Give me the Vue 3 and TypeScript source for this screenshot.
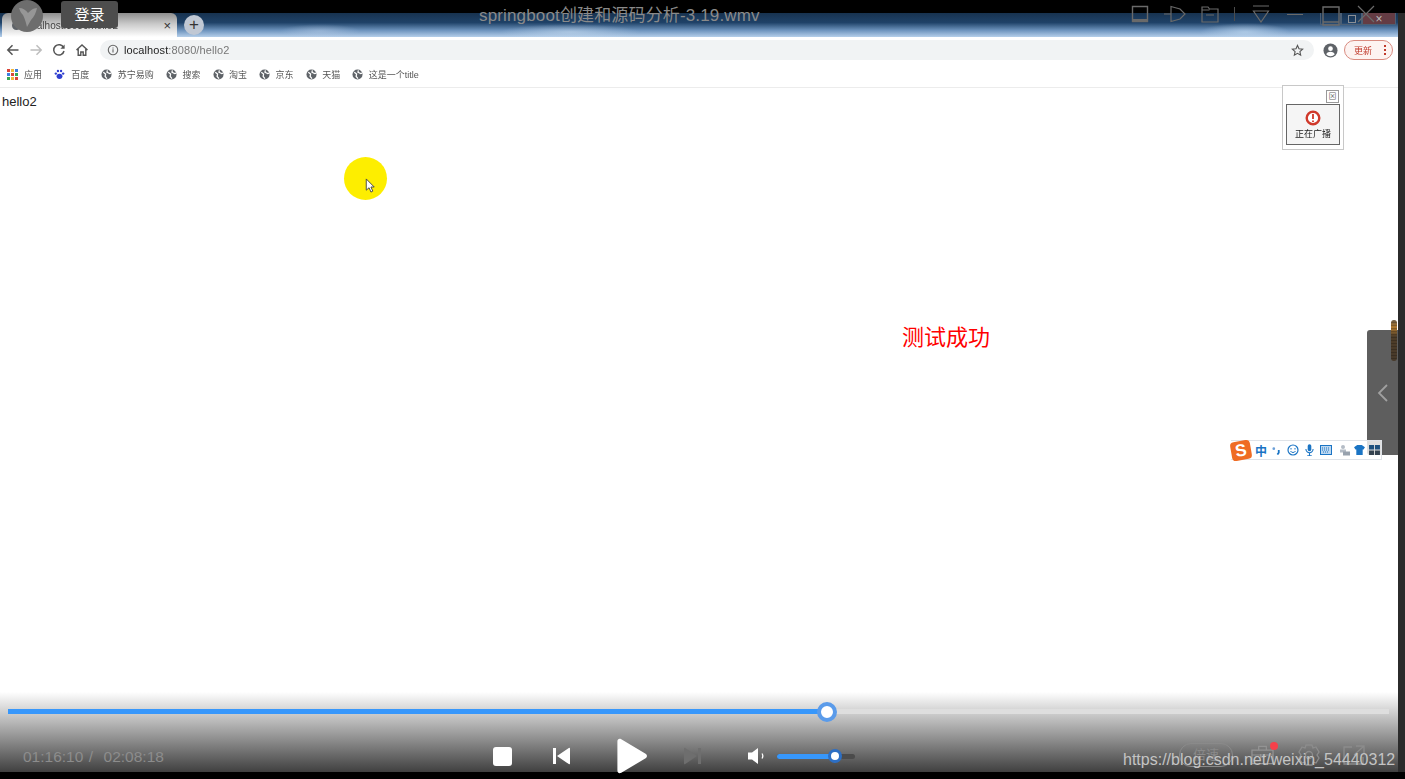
<script setup lang="ts">
const bookmarks = ['苏宁易购', '搜索', '淘宝', '京东', '天猫', '这是一个title']
const appsColors = ['#d9453a', '#f2b63c', '#3d7fe0', '#3d7fe0', '#d9453a', '#36a853', '#36a853', '#f2b63c', '#d9453a']
const progress = 59.3
</script>

<template>
  <div class="player">
    <div class="frame-top"></div>
    <div class="middle">
      <div class="screen">
        <div class="tabstrip">
          <div class="tab">
            <span class="favicon"></span>
            <span class="tab-title">localhost:8080/hello2</span>
            <span class="tab-close">×</span>
          </div>
          <div class="new-tab">+</div>
          <div class="caption">
            <span class="cap-btn"></span>
            <span class="cap-btn"><i></i></span>
            <span class="cap-btn cap-close">×</span>
          </div>
        </div>
        <div class="toolbar">
          <svg class="nav" viewBox="0 0 14 14" width="14" height="14">
            <path d="M12.500 7H2M6.500 2.200 1.800 7l4.700 4.800" fill="none" stroke="#555" stroke-width="1.500" />
          </svg>
          <svg class="nav" viewBox="0 0 14 14" width="14" height="14">
            <path d="M1.500 7H12M7.500 2.200 12.200 7l-4.700 4.800" fill="none" stroke="#bdbdbd" stroke-width="1.500" />
          </svg>
          <svg class="nav" viewBox="0 0 14 14" width="14" height="14">
            <path d="M11.600 4.600A5.200 5.200 0 1 0 12 8" fill="none" stroke="#555" stroke-width="1.500" />
            <path d="M12.600 1.600v4.200H8.400z" fill="#555" />
          </svg>
          <svg class="nav" viewBox="0 0 14 14" width="14" height="14">
            <path d="M1.500 7 7 2l5.500 5M3.200 6v6.300h2.600V9h2.400v3.300h2.600V6" fill="none" stroke="#555" stroke-width="1.400" />
          </svg>
          <div class="omnibox">
            <svg viewBox="0 0 12 12" width="12" height="12">
              <circle cx="6" cy="6" r="4.700" fill="none" stroke="#666" stroke-width="1.100" />
              <path d="M6 5.200v3.200M6 3.400v1" stroke="#666" stroke-width="1.100" />
            </svg>
            <span class="url"><b>localhost</b>:8080/hello2</span>
            <svg class="star" viewBox="0 0 14 14" width="13" height="13">
              <path d="m7 1.600 1.600 3.600 3.900.4-2.900 2.600.8 3.800L7 10.100l-3.400 1.900.8-3.800-2.900-2.600 3.900-.4z" fill="none" stroke="#555" stroke-width="1.200" />
            </svg>
          </div>
          <svg class="profile" viewBox="0 0 16 16" width="15" height="15">
            <circle cx="8" cy="8" r="7.500" fill="#5f6368" />
            <circle cx="8" cy="6" r="2.500" fill="#fff" />
            <path d="M3.400 12c1-1.900 2.800-2.600 4.600-2.600s3.600.7 4.600 2.600A6 6 0 0 1 8 14a6 6 0 0 1-4.600-2z" fill="#fff" />
          </svg>
          <div class="update">
            <span>更新</span>
            <span class="dots"><i></i><i></i><i></i></span>
          </div>
        </div>
        <div class="bookmarks">
          <div class="bm bm-wide">
            <span class="apps"><i v-for="(c, i) in appsColors" :key="i" :style="{ background: c }"></i></span>
            <span>应用</span>
          </div>
          <div class="bm bm-wide">
            <svg viewBox="0 0 12 12" width="11" height="11">
              <ellipse cx="6" cy="8" rx="3.200" ry="2.800" fill="#2f3fd0" />
              <circle cx="2" cy="5" r="1.300" fill="#2f3fd0" />
              <circle cx="10" cy="5" r="1.300" fill="#2f3fd0" />
              <circle cx="4.300" cy="2.200" r="1.300" fill="#2f3fd0" />
              <circle cx="7.700" cy="2.200" r="1.300" fill="#2f3fd0" />
            </svg>
            <span>百度</span>
          </div>
          <div class="bm" v-for="name in bookmarks" :key="name">
            <svg viewBox="0 0 12 12" width="11" height="11">
              <circle cx="6" cy="6" r="5.500" fill="#5f6368" />
              <path d="M2.500 3.500 5 5.500 4.500 8l2 2.500M7 1.500 6.500 3.500l3 1.500 1.500-.5" fill="none" stroke="#fff" stroke-width="1.400" />
            </svg>
            <span>{{ name }}</span>
          </div>
        </div>
        <div class="page">
          <p class="hello">hello2</p>
          <p class="success">测试成功</p>
        </div>
      </div>
      <div class="frame-right"></div>
    </div>
    <div class="frame-bottom"></div>

    <!-- things the video player draws over the recording -->
    <div class="avatar">
      <svg viewBox="0 0 32 32" width="32" height="32">
        <path d="M8 8c4 0 7 2 9 5 2-2 5-5 9-5-1 5-3 9-6 12l-4 7c-1-4-2-8-4-12-2-2-3-4-4-7z" fill="#969696" />
      </svg>
    </div>
    <div class="login">登录</div>
    <div class="video-title">springboot创建和源码分析-3.19.wmv</div>

    <div class="win-icons">
      <svg viewBox="0 0 18 18" width="18" height="18">
        <path d="M1.500 1.500h15v15h-15z" fill="none" stroke="#6a6a6a" stroke-width="1.400" />
        <path d="M1.500 14h15v2.500h-15z" fill="#6a6a6a" />
      </svg>
      <svg viewBox="0 0 22 18" width="22" height="18">
        <path d="M0 9h7M7 1.500l9 2.500 5 5-5 5-9 2.500z" fill="none" stroke="#6a6a6a" stroke-width="1.200" />
      </svg>
      <svg viewBox="0 0 18 18" width="18" height="18">
        <path d="M1 2h6l1.500 2H17v13H1zM1 5h7.500M5 10h8" fill="none" stroke="#6a6a6a" stroke-width="1.200" />
      </svg>
      <span class="win-sep"></span>
      <svg class="win-filter" viewBox="0 0 18 18" width="18" height="18">
        <path d="M1 1h16M1.500 6h15L9 17z" fill="none" stroke="#6a6a6a" stroke-width="1.200" />
      </svg>
      <span class="win-min"></span>
      <svg class="win-max" viewBox="0 0 18 20" width="18" height="20">
        <path d="M1 1h16v15H1zM1 16v3h16v-3" fill="none" stroke="#6a6a6a" stroke-width="1.400" />
      </svg>
      <svg viewBox="0 0 18 18" width="18" height="18">
        <path d="M1 1l16 16M17 1 1 17" fill="none" stroke="#6a6a6a" stroke-width="1.200" />
      </svg>
    </div>

    <div class="side-handle">
      <svg viewBox="0 0 12 20" width="12" height="20">
        <path d="M10 2 2 10l8 8" fill="none" stroke="#a0a0a0" stroke-width="1.800" />
      </svg>
    </div>
    <div class="scroll-thumb"></div>

    <div class="broadcast">
      <span class="bc-close">⊠</span>
      <div class="bc-body">
        <svg viewBox="0 0 16 16" width="16" height="16">
          <circle cx="8" cy="8" r="6.300" fill="#fff" stroke="#d0392b" stroke-width="2.400" />
          <path d="M8 4v5M8 10.500v1.500" stroke="#d0392b" stroke-width="1.800" />
        </svg>
        <span>正在广播</span>
      </div>
    </div>

    <div class="pointer-spot"></div>
    <div class="pointer">
      <svg viewBox="0 0 10 16" width="10" height="15">
        <path d="M1 1v12l3-2.600 2 4.600 2-1-2-4.400h3.500z" fill="#fff" stroke="#444" stroke-width="1" />
      </svg>
    </div>

    <div class="ime">
      <span class="ime-logo">S</span>
      <span class="ime-zh">中</span>
      <svg viewBox="0 0 10 10" width="9" height="9">
        <circle cx="2" cy="3" r="1.500" fill="#6a9fd8" />
        <path d="M7.500 4.500v3L6 9.500" stroke="#1a74c4" stroke-width="2" fill="none" />
      </svg>
      <svg class="ime-gap" viewBox="0 0 12 12" width="12" height="12">
        <circle cx="6" cy="6" r="5" fill="none" stroke="#1a74c4" stroke-width="1.200" />
        <path d="M3.500 7c1 2 4 2 5 0M4 4v1.500M8 4v1.500" fill="none" stroke="#1a74c4" stroke-width="1" />
      </svg>
      <svg viewBox="0 0 10 13" width="9" height="12">
        <rect x="3" y="0" width="4" height="8" rx="2" fill="#1a74c4" />
        <path d="M1 5.500a4 4 0 0 0 8 0M5 9.500V13M2.500 13h5" fill="none" stroke="#1a74c4" stroke-width="1.200" />
      </svg>
      <svg class="ime-gap" viewBox="0 0 12 10" width="12" height="10">
        <rect x="0.500" y="0.500" width="11" height="9" fill="#bcd7f0" stroke="#1a74c4" />
        <path d="M2 3h8M2 5h8M3 7h6" stroke="#1a74c4" stroke-dasharray="1 1" />
      </svg>
      <svg viewBox="0 0 12 12" width="12" height="12">
        <circle cx="5" cy="3" r="2" fill="#b4bcc6" />
        <rect x="2" y="5.500" width="6" height="3" fill="#b4bcc6" />
        <rect x="5" y="7.500" width="7" height="4" fill="#98a2ae" />
      </svg>
      <svg class="ime-tight" viewBox="0 0 12 11" width="11" height="10">
        <path d="M3.500 0h5L12 2.500 10.500 5H9.500v6h-7V5h-1L0 2.500z" fill="#1a74c4" />
      </svg>
      <svg class="ime-tight" viewBox="0 0 12 11" width="11" height="10">
        <path d="M0 0h5.500v5H0zM6.500 0H12v5H6.500z" fill="#1c4f7d" />
        <path d="M0 6h5.500v5H0zM6.500 6H12v5H6.500z" fill="#34424f" />
      </svg>
    </div>

    <div class="controls">
      <div class="seek">
        <div class="seek-fill" :style="{ width: progress + '%' }">
          <span class="seek-knob"></span>
        </div>
      </div>
      <div class="ctl-row">
        <div class="time">01:16:10 /&nbsp; 02:08:18</div>
        <div class="ctl-center">
          <span class="stop"></span>
          <svg viewBox="0 0 20 20" width="20" height="20">
            <path d="M1 2h3v16H1zM18 2.500v15a.8.8 0 0 1-1.200.6L5 10l11.800-8.100a.8.8 0 0 1 1.200.6z" fill="#fff" />
          </svg>
          <svg class="play" viewBox="0 0 32 37" width="32" height="36">
            <path d="M1 3.500c0-2.500 2-3.500 4-2.300l25 15c1.800 1.100 1.800 3.500 0 4.600l-25 15c-2 1.200-4 .2-4-2.300z" fill="#fff" />
          </svg>
          <svg viewBox="0 0 20 20" width="20" height="20">
            <path d="M19 2h-3v16h3zM2 2.500v15a.8.8 0 0 0 1.200.6L15 10 3.200 1.900A.8.8 0 0 0 2 2.500z" fill="#6e6e6e" />
          </svg>
          <div class="volume">
            <svg viewBox="0 0 20 18" width="20" height="18">
              <path d="M1 5.500h4L11 1v16l-6-4.500H1z" fill="#fff" />
              <path d="M15 6.500c1 1.500 1 3.500 0 5" fill="none" stroke="#fff" stroke-width="1.300" />
            </svg>
            <div class="vol-track">
              <div class="vol-fill"><span class="vol-knob"></span></div>
            </div>
          </div>
        </div>
        <div class="ctl-right">
          <span class="speed">倍速</span>
          <span class="red-dot-wrap">
            <svg viewBox="0 0 24 20" width="23" height="20">
              <path d="M1 5h22v14H1zM8 5V1h8v4M1 10h22M10 9v3h4V9" fill="none" stroke="#939393" stroke-width="1.300" />
            </svg>
            <i class="red-dot"></i>
          </span>
          <svg class="gear" viewBox="0 0 22 22" width="22" height="22">
            <path d="M8 1h6l1 3 3-1 3 5-2 3 2 3-3 5-3-1-1 3H8l-1-3-3 1-3-5 2-3-2-3 3-5 3 1z" fill="none" stroke="#8c8c8c" stroke-width="1.300" />
            <circle cx="11" cy="11" r="3.500" fill="none" stroke="#8c8c8c" stroke-width="1.300" />
          </svg>
          <svg class="fullscreen" viewBox="0 0 22 20" width="22" height="20">
            <path d="M9 2H1v17h19v-7M13 1h8v7M21 1l-10 9" fill="none" stroke="#8c8c8c" stroke-width="1.300" />
          </svg>
        </div>
      </div>
    </div>
    <div class="watermark">https://blog.csdn.net/weixin_54440312</div>
  </div>
</template>

<style scoped>
.player {
  position: relative;
  width: 1405px;
  height: 779px;
  display: flex;
  flex-direction: column;
  overflow: hidden;
  background: #000;
  font-family: "Liberation Sans", "Noto Sans CJK SC", sans-serif;
}
.frame-top {
  height: 13px;
  background: #000;
}
.frame-bottom {
  height: 7px;
  background: #000;
}
.frame-right {
  width: 7px;
  background: #2b2b2b;
}
.middle {
  flex: 1;
  display: flex;
  min-height: 0;
}
.screen {
  flex: 1;
  display: flex;
  flex-direction: column;
  background: #fff;
}
.tabstrip {
  height: 24px;
  display: flex;
  align-items: flex-end;
  padding-left: 2px;
  background:
    radial-gradient(ellipse 40px 7px at 320px 18px, rgba(190, 210, 235, 0.45), transparent),
    radial-gradient(ellipse 45px 9px at 1245px 19px, rgba(190, 215, 240, 0.7), transparent),
    radial-gradient(ellipse 70px 8px at 570px 19px, rgba(200, 220, 240, 0.6), transparent),
    linear-gradient(#17324f 0, #1f4268 40%, #6d93bd 72%, #b5cfea 100%);
}
.tab {
  width: 175px;
  height: 24px;
  display: flex;
  align-items: center;
  box-sizing: border-box;
  padding: 0 6px 0 10px;
  gap: 3px;
  border-radius: 6px 6px 0 0;
  background: linear-gradient(#8d8d8d, #c9c9c9 45%, #fff);
  font-size: 10px;
  color: #444;
}
.favicon {
  width: 9px;
  height: 9px;
  border-radius: 50%;
  background: #5f6368;
}
.tab-title {
  flex: 1;
  white-space: nowrap;
  filter: blur(0.4px);
}
.tab-close {
  font-size: 13px;
  color: #333;
}
.new-tab {
  width: 20px;
  height: 20px;
  margin: 0 0 2px 7px;
  border-radius: 50%;
  background: #c0c8d4;
  color: #333;
  font-size: 17px;
  line-height: 19px;
  text-align: center;
}
.caption {
  align-self: flex-start;
  margin-left: auto;
  margin-right: 2px;
  display: flex;
}
.cap-btn {
  width: 21px;
  height: 12px;
  display: flex;
  align-items: center;
  justify-content: center;
  box-sizing: border-box;
  border: 1px solid #4b5f75;
  border-top: none;
}
.cap-btn i {
  width: 6px;
  height: 6px;
  border: 1px solid #8a8f96;
}
.cap-close {
  width: 34px;
  background: #643c44;
  color: #bdbdbd;
  font-size: 12px;
  line-height: 12px;
}
.toolbar {
  height: 25px;
  display: flex;
  align-items: center;
  padding-top: 1px;
  box-sizing: border-box;
  background: #fff;
  filter: blur(0.3px);
}
.nav {
  flex: none;
  margin-left: 6px;
  margin-right: 3px;
}
.nav + .nav {
  margin-left: 6px;
}
.omnibox {
  width: 1214px;
  height: 20px;
  margin-left: 8px;
  display: flex;
  align-items: center;
  gap: 5px;
  box-sizing: border-box;
  padding: 0 10px 0 7px;
  border-radius: 10px;
  background: #f1f3f4;
}
.url {
  flex: 1;
  font-size: 11px;
  color: #777;
  letter-spacing: 0.1px;
}
.url b {
  font-weight: normal;
  color: #222;
}
.profile {
  flex: none;
  margin-left: 9px;
}
.update {
  width: 49px;
  height: 20px;
  margin-left: 6px;
  display: flex;
  align-items: center;
  justify-content: space-between;
  box-sizing: border-box;
  padding: 0 6px 0 9px;
  border: 1px solid #d98b80;
  border-radius: 10px;
  background: #fdf3f1;
  font-size: 9px;
  color: #c0392b;
}
.dots {
  display: flex;
  flex-direction: column;
  gap: 2px;
}
.dots i {
  width: 2px;
  height: 2px;
  background: #c0392b;
}
.bookmarks {
  height: 26px;
  display: flex;
  align-items: center;
  gap: 12.2px;
  padding-left: 7px;
  box-sizing: border-box;
  border-bottom: 1px solid #ececec;
  font-size: 9px;
  color: #555;
  filter: blur(0.3px);
}
.bm {
  display: flex;
  align-items: center;
  gap: 5.4px;
}
.bm-wide {
  gap: 6px;
}
.apps {
  width: 11px;
  display: grid;
  grid-template-columns: repeat(3, 3px);
  gap: 1px;
}
.apps i {
  height: 3px;
}
.page {
  flex: 1;
  position: relative;
  display: flex;
  flex-direction: column;
}
.hello {
  margin: 6px 0 0 2px;
  font-size: 13px;
  line-height: 16px;
  color: #222;
}
.success {
  margin: 214px 0 0 902px;
  font-size: 22px;
  line-height: 28px;
  color: #f00;
}

.avatar {
  position: absolute;
  left: 11px;
  top: 0;
  width: 32px;
  height: 32px;
  border-radius: 50%;
  background: #6d6d6d;
}
.login {
  position: absolute;
  left: 61px;
  top: 1px;
  width: 57px;
  height: 27px;
  border-radius: 3px;
  background: #4d4d4d;
  color: #fff;
  font-size: 15px;
  line-height: 28px;
  text-align: center;
}
.video-title {
  position: absolute;
  left: 479px;
  top: 6px;
  font-size: 17px;
  line-height: 19px;
  letter-spacing: 0.15px;
  color: #8a8a8a;
}
.win-icons {
  position: absolute;
  left: 1131px;
  top: 4px;
  height: 20px;
  display: flex;
  align-items: center;
  gap: 15px;
}
.win-sep {
  width: 1px;
  height: 14px;
  background: #4c4c4c;
}
.win-filter,
.win-min {
  margin-left: 2px;
}
.win-min {
  width: 16px;
  height: 1px;
  background: #6a6a6a;
}
.win-max {
  margin-left: 4px;
  margin-right: 2px;
  margin-top: 3px;
}
.side-handle {
  position: absolute;
  left: 1367px;
  top: 330px;
  width: 31px;
  height: 125px;
  display: flex;
  align-items: center;
  justify-content: center;
  border-radius: 3px 0 0 3px;
  background: #5e5e5e;
}
.scroll-thumb {
  position: absolute;
  left: 1391px;
  top: 320px;
  width: 6px;
  height: 41px;
  border-radius: 3px;
  background:
    repeating-linear-gradient(transparent 0, transparent 2px, rgba(0, 0, 0, 0.2) 2px, rgba(0, 0, 0, 0.2) 3px),
    linear-gradient(#6a5a44, #b07a30 18%, #4e3d28 40%, #47392a);
}
.broadcast {
  position: absolute;
  left: 1282px;
  top: 85px;
  width: 62px;
  height: 65px;
  display: flex;
  flex-direction: column;
  align-items: flex-end;
  gap: 1px;
  box-sizing: border-box;
  padding: 4px 3px 3px;
  border: 1px solid #c8c8c8;
  background: #fff;
}
.bc-close {
  width: 13px;
  height: 13px;
  margin-right: 1px;
  box-sizing: border-box;
  border: 1px solid #999;
  font-size: 8px;
  line-height: 11px;
  text-align: center;
  color: #666;
}
.bc-body {
  width: 54px;
  height: 41px;
  display: flex;
  flex-direction: column;
  align-items: center;
  justify-content: center;
  gap: 1px;
  box-sizing: border-box;
  border: 1px solid #666;
  background: #f5f5f5;
  font-size: 9px;
  color: #222;
  filter: blur(0.25px);
}
.pointer {
  position: absolute;
  left: 365px;
  top: 178px;
  line-height: 0;
}
.pointer-spot {
  position: absolute;
  left: 344px;
  top: 157px;
  width: 43px;
  height: 43px;
  border-radius: 50%;
  background: #fdee00;
}
.ime {
  position: absolute;
  left: 1231px;
  top: 440px;
  width: 151px;
  height: 20px;
  display: flex;
  align-items: center;
  gap: 5px;
  box-sizing: border-box;
  background: rgba(255, 255, 255, 0.8);
  border: 1px solid #dfe3e8;
  border-left: none;
}
.ime-logo {
  width: 20px;
  height: 19px;
  flex: none;
  margin-right: -1px;
  border-radius: 4px;
  background: #ef6c24;
  transform: rotate(-10deg);
  color: #fff;
  font-size: 17px;
  font-weight: bold;
  line-height: 19px;
  text-align: center;
}
.ime-zh {
  font-size: 12px;
  font-weight: bold;
  color: #1a74c4;
}
.ime-gap {
  margin-left: 1px;
  margin-right: 1px;
}
.ime-tight {
  margin-left: -1px;
}
.controls {
  position: absolute;
  left: 0;
  right: 7px;
  top: 692px;
  height: 80px;
  background: linear-gradient(rgba(64, 64, 64, 0), rgba(64, 64, 64, 1));
}
.seek {
  position: relative;
  margin: 17px 9px 0 8px;
  height: 5px;
  background: #dedede;
}
.seek-fill {
  position: relative;
  height: 5px;
  background: #3797fb;
}
.seek-knob {
  position: absolute;
  right: -10px;
  top: -7.5px;
  width: 20px;
  height: 20px;
  box-sizing: border-box;
  border: 4px solid #5a9bea;
  border-radius: 50%;
  background: #fff;
}
.ctl-row {
  position: relative;
  height: 58px;
}
.time {
  position: absolute;
  left: 23px;
  top: 34px;
  font-size: 15.5px;
  line-height: 18px;
  word-spacing: 1px;
  color: #8c8c8c;
}
.ctl-center {
  position: absolute;
  left: 493px;
  top: 22px;
  display: flex;
  align-items: center;
  height: 40px;
}
.stop {
  width: 19px;
  height: 19px;
  border-radius: 3px;
  background: #fff;
  margin-right: 40px;
}
.play {
  margin: 0 34px 0 44px;
}
.volume {
  display: flex;
  align-items: center;
  margin-left: 45px;
  gap: 10px;
}
.vol-track {
  width: 78px;
  height: 5px;
  border-radius: 3px;
  background: #4b4b4b;
}
.vol-fill {
  position: relative;
  width: 60px;
  height: 5px;
  border-radius: 3px;
  background: #3797fb;
}
.vol-knob {
  position: absolute;
  right: -5px;
  top: -4.5px;
  width: 14px;
  height: 14px;
  box-sizing: border-box;
  border: 3.5px solid #2d6fc4;
  border-radius: 50%;
  background: #fff;
}
.ctl-right {
  position: absolute;
  left: 1179px;
  top: 22px;
  height: 38px;
  display: flex;
  align-items: center;
  gap: 18px;
}
.gear {
  margin-left: 6px;
}
.fullscreen {
  margin-left: 5px;
}
.speed {
  width: 54px;
  height: 24px;
  box-sizing: border-box;
  border: 1px solid #8a8a8a;
  border-radius: 12px;
  font-size: 13px;
  line-height: 22px;
  text-align: center;
  color: #8a8a8a;
}
.red-dot-wrap {
  position: relative;
  line-height: 0;
}
.red-dot {
  position: absolute;
  right: -4px;
  top: -3px;
  width: 8px;
  height: 8px;
  border-radius: 50%;
  background: #f5404a;
}
.watermark {
  position: absolute;
  left: 1123px;
  top: 750px;
  font-size: 16px;
  line-height: 19px;
  color: #c4c4c4;
  white-space: nowrap;
}
</style>
